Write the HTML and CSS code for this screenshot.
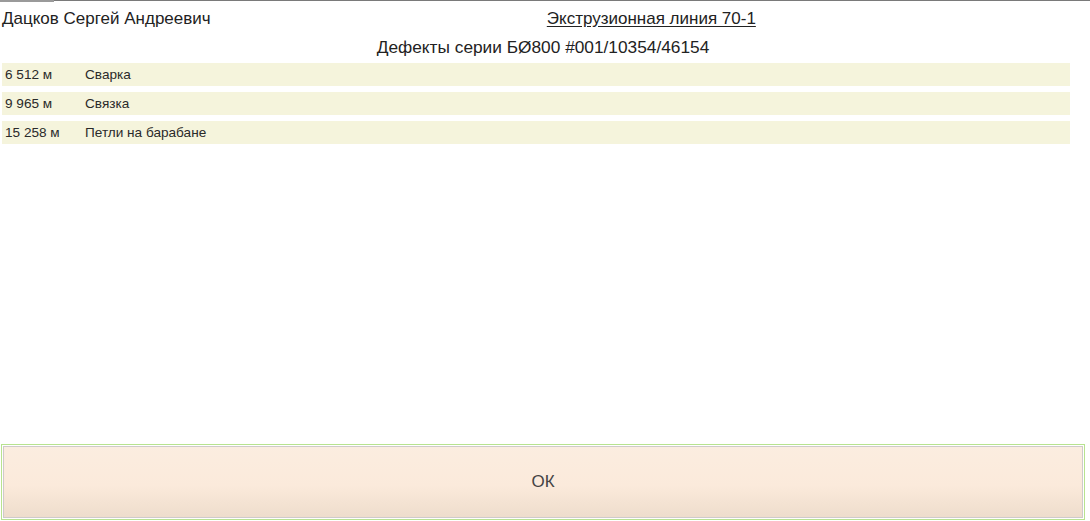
FILE: index.html
```html
<!DOCTYPE html>
<html lang="ru">
<head>
<meta charset="utf-8">
<title>Дефекты</title>
<link rel="stylesheet" href="styles.css">
</head>
<body>
<div class="page">
  <div class="topbar"><span class="topbar-tab"></span></div>
  <header class="header">
    <div class="user">Дацков Сергей Андреевич</div>
    <div class="line"><a class="line-link">Экструзионная линия 70-1</a></div>
  </header>
  <h1 class="title">Дефекты серии БØ800 #001/10354/46154</h1>
  <ul class="defects">
    <li class="defect"><span class="pos">6 512 м</span><span class="name">Сварка</span></li>
    <li class="defect"><span class="pos">9 965 м</span><span class="name">Связка</span></li>
    <li class="defect"><span class="pos">15 258 м</span><span class="name">Петли на барабане</span></li>
  </ul>
  <div class="actions">
    <button class="ok-btn">ОК</button>
  </div>
</div>
</body>
</html>
```
FILE: styles.css
```css
html, body {
  margin: 0;
  padding: 0;
  background: #fff;
}
body {
  font-family: "Liberation Sans", Arial, sans-serif;
  color: #333;
}
.page {
  height: 521px;
  display: flex;
  flex-direction: column;
  box-sizing: border-box;
}
.topbar {
  height: 1px;
  background: #7a7a7a;
  display: flex;
}
.topbar-tab {
  width: 54px;
  height: 2px;
  background: #9a9a9a;
}
.header {
  display: flex;
  align-items: center;
  padding: 8px 0 0 2px;
  height: 20px;
  font-size: 17px;
  line-height: 20px;
}
.user {
  color: #222;
}
.line {
  flex: 1;
  text-align: center;
  padding-left: 2px;
}
.line-link {
  color: #222;
  text-decoration: underline;
  text-underline-offset: 2px;
}
.title {
  margin: 8px 0 0 0;
  font-size: 17.3px;
  font-weight: normal;
  line-height: 20px;
  text-align: center;
  color: #222;
  padding-right: 4px;
}
.defects {
  list-style: none;
  margin: 6px 0 0 0;
  padding: 0 20px 0 2px;
  display: flex;
  flex-direction: column;
  gap: 6px;
}
.defect {
  display: flex;
  align-items: center;
  height: 23px;
  background: #f5f4dc;
  font-size: 13.6px;
  color: #2a2a2a;
}
.pos {
  width: 80px;
  padding-left: 3px;
}
.actions {
  margin-top: auto;
  padding: 0 5px 1px 1px;
}
.ok-btn {
  display: block;
  width: 100%;
  height: 76px;
  box-sizing: border-box;
  border: 1px solid #b8e38f;
  outline: none;
  box-shadow: inset 0 0 0 1px #fff, inset 0 0 0 2px #cfcaca;
  background: linear-gradient(to bottom, #fbede0 0%, #fbeadb 55%, #eddccb 100%);
  font-family: "Liberation Sans", Arial, sans-serif;
  font-size: 17px;
  color: #444;
  padding: 0;
  cursor: pointer;
}
```
